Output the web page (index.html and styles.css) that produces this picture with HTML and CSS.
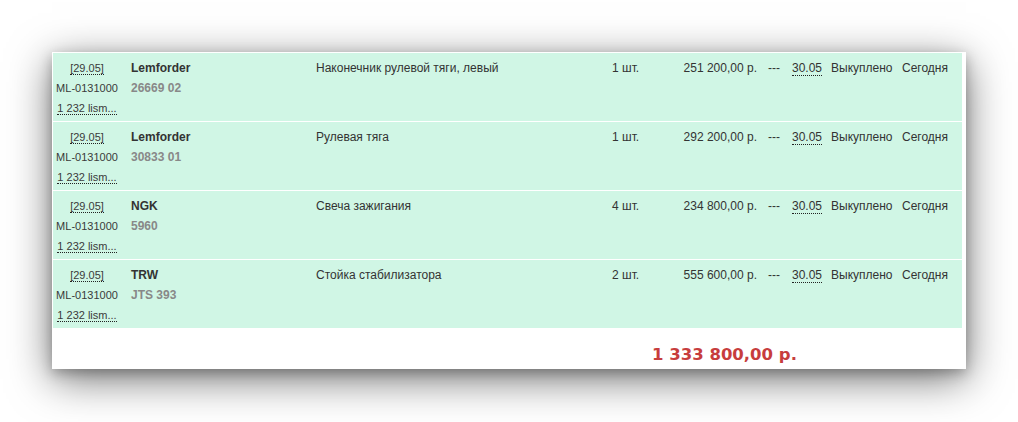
FILE: index.html
```html
<!DOCTYPE html>
<html lang="ru">
<head>
<meta charset="utf-8">
<title>Заказ</title>
<link rel="stylesheet" href="styles.css">
</head>
<body>
<div class="stage">
  <div class="panel">
    <div class="rows">
      <div class="row">
        <div class="c-meta">
          <div><span class="dot">[29.05]</span></div>
          <div>ML-0131000</div>
          <div><span class="dot">1 232 lism...</span></div>
        </div>
        <div class="c-brand"><b class="brand">Lemforder</b><b class="art">26669 02</b></div>
        <div class="c-name">Наконечник рулевой тяги, левый</div>
        <div class="c-qty">1 шт.</div>
        <div class="c-price">251 200,00 р.</div>
        <div class="c-dash">---</div>
        <div class="c-date"><span class="dot">30.05</span></div>
        <div class="c-status">Выкуплено</div>
        <div class="c-when">Сегодня</div>
      </div>
      <div class="row">
        <div class="c-meta">
          <div><span class="dot">[29.05]</span></div>
          <div>ML-0131000</div>
          <div><span class="dot">1 232 lism...</span></div>
        </div>
        <div class="c-brand"><b class="brand">Lemforder</b><b class="art">30833 01</b></div>
        <div class="c-name">Рулевая тяга</div>
        <div class="c-qty">1 шт.</div>
        <div class="c-price">292 200,00 р.</div>
        <div class="c-dash">---</div>
        <div class="c-date"><span class="dot">30.05</span></div>
        <div class="c-status">Выкуплено</div>
        <div class="c-when">Сегодня</div>
      </div>
      <div class="row">
        <div class="c-meta">
          <div><span class="dot">[29.05]</span></div>
          <div>ML-0131000</div>
          <div><span class="dot">1 232 lism...</span></div>
        </div>
        <div class="c-brand"><b class="brand">NGK</b><b class="art">5960</b></div>
        <div class="c-name">Свеча зажигания</div>
        <div class="c-qty">4 шт.</div>
        <div class="c-price">234 800,00 р.</div>
        <div class="c-dash">---</div>
        <div class="c-date"><span class="dot">30.05</span></div>
        <div class="c-status">Выкуплено</div>
        <div class="c-when">Сегодня</div>
      </div>
      <div class="row">
        <div class="c-meta">
          <div><span class="dot">[29.05]</span></div>
          <div>ML-0131000</div>
          <div><span class="dot">1 232 lism...</span></div>
        </div>
        <div class="c-brand"><b class="brand">TRW</b><b class="art">JTS 393</b></div>
        <div class="c-name">Стойка стабилизатора</div>
        <div class="c-qty">2 шт.</div>
        <div class="c-price">555 600,00 р.</div>
        <div class="c-dash">---</div>
        <div class="c-date"><span class="dot">30.05</span></div>
        <div class="c-status">Выкуплено</div>
        <div class="c-when">Сегодня</div>
      </div>
    </div>
    <div class="footer">
      <span class="total">1 333 800,00 р.</span>
    </div>
  </div>
</div>
</body>
</html>
```

FILE: styles.css
```css
html, body {
  margin: 0;
  padding: 0;
  background: #ffffff;
}

body {
  font-family: "Liberation Sans", Arial, sans-serif;
  font-size: 12px;
  color: #333333;
  min-height: 422px;
}

.stage {
  padding: 52px 0 0 52px;
}

.panel {
  width: 909px;
  padding: 1px 4px 0 1px;
  background: #ffffff;
  box-shadow: 0 10px 40px rgba(0, 0, 0, 0.55), 0 4px 12px rgba(0, 0, 0, 0.25);
}

.rows {
  display: flex;
  flex-direction: column;
}

.row {
  display: grid;
  grid-template-columns: 78px 185px 296px 60px 85px 35px 39px 71px 1fr;
  box-sizing: border-box;
  height: 69px;
  padding-top: 5px;
  border-bottom: 1px solid #ffffff;
  background: #d0f6e5;
  line-height: 20px;
}

.row:last-child {
  border-bottom: 0;
  height: 68px;
}

.c-meta {
  width: 68px;
  text-align: center;
  font-size: 11px;
  line-height: 20px;
  color: #3a3a3a;
}

.dot {
  border-bottom: 1px dotted #222222;
}

.c-brand {
  display: flex;
  flex-direction: column;
}

.brand {
  font-weight: bold;
  color: #333333;
}

.art {
  font-weight: bold;
  color: #888888;
}

.c-price {
  text-align: right;
}

.c-dash {
  padding-left: 11px;
}

.footer {
  height: 41px;
  box-sizing: border-box;
  padding: 17px 0 0 599px;
}

.total {
  font-family: "DejaVu Sans", sans-serif;
  font-weight: bold;
  font-size: 16.5px;
  line-height: 20px;
  color: #c73d3d;
}
```
